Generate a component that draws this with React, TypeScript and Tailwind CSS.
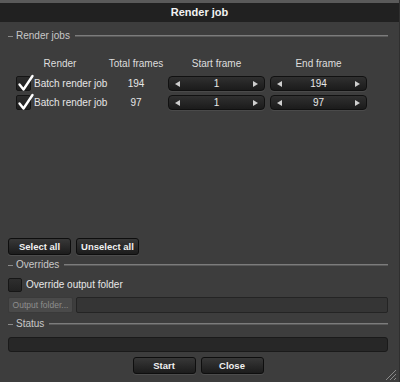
import React from "react";

const font = { fontFamily: '"Liberation Sans", Arial, sans-serif' };

function Legend({ label }: { label: string }) {
  return (
    <div className="flex items-center h-[12px] pl-[8px] pr-[11px]">
      <div className="w-[5px] h-[1px] bg-[#8a8a8a] mr-[3px]" />
      <span className="text-[10px] text-[#c8c8c8] leading-none whitespace-nowrap">{label}</span>
      <div className="flex-1 h-[2px] bg-[#7c7c7c] ml-[5px] border-b border-[#5a5a5a]" />
    </div>
  );
}

function Check({ checked }: { checked: boolean }) {
  return (
    <div className="relative shrink-0 w-[15px] h-[15px] rounded-[2px] bg-gradient-to-b from-[#2c2c2c] to-[#1e1e1e] border border-[#151515]">
      {checked && (
        <svg className="absolute left-[0px] top-[-3px]" width="18" height="18" viewBox="0 0 18 18">
          <path d="M2.5 10.5 L6.5 15.5 L15.5 2" fill="none" stroke="#ffffff" strokeWidth="2.4" strokeLinecap="round" strokeLinejoin="round" />
        </svg>
      )}
    </div>
  );
}

function Spinner({ value }: { value: string }) {
  return (
    <div className="relative flex items-center justify-center h-[15px] w-[97px] rounded-[4px] bg-gradient-to-b from-[#303030] to-[#1b1b1b] border border-[#111] shadow-[0_1px_0_#4a4a4a]">
      <svg className="absolute left-[6px] top-[4px]" width="5" height="6" viewBox="0 0 5 6">
        <path d="M5 0 L0 3 L5 6 Z" fill="#cfcfcf" />
      </svg>
      <span className="text-[10px] text-[#e8e8e8] leading-none">{value}</span>
      <svg className="absolute right-[6px] top-[4px]" width="5" height="6" viewBox="0 0 5 6">
        <path d="M0 0 L5 3 L0 6 Z" fill="#cfcfcf" />
      </svg>
    </div>
  );
}

function Btn({ label }: { label: string }) {
  return (
    <div className="w-[63px] h-[17px] flex items-center justify-center rounded-[3px] bg-gradient-to-b from-[#383838] to-[#1c1c1c] border border-[#0e0e0e] shadow-[0_1px_0_#4c4c4c]">
      <span className="text-[9.5px] font-bold text-[#f0f0f0] leading-none whitespace-nowrap">{label}</span>
    </div>
  );
}

export default function App() {
  const rows = [
    { total: "194", start: "1", end: "194" },
    { total: "97", start: "1", end: "97" },
  ];
  return (
    <div style={font} className="relative w-[400px] h-[382px] bg-[#3d3d3d] flex flex-col overflow-hidden border-r border-[#2f2f2f]">
      <div className="h-[3px] bg-[#5a5a5a]" />
      <div className="h-[19px] bg-[#212121] flex items-center justify-center">
        <span className="text-[11px] font-bold text-[#f2f2f2] leading-none">Render job</span>
      </div>
      <div className="mt-[8px]">
        <Legend label="Render jobs" />
      </div>
      <div className="mt-[17px] pl-[16px]">
        <div className="grid grid-cols-[88px_64px_97px_102px] text-[10px] text-[#dedede]">
          <div className="text-center leading-none whitespace-nowrap">Render</div>
          <div className="text-center leading-none whitespace-nowrap">Total frames</div>
          <div className="text-center leading-none whitespace-nowrap">Start frame</div>
          <div className="text-center leading-none whitespace-nowrap pl-[5px]">End frame</div>
        </div>
        <div className="mt-[7px] flex flex-col gap-[4px]">
          {rows.map((r, i) => (
            <div key={i} className="grid grid-cols-[88px_64px_97px_102px] items-center h-[15px]">
              <div className="flex items-center gap-[3px]">
                <Check checked />
                <span className="text-[10px] text-[#e6e6e6] leading-none whitespace-nowrap">Batch render job</span>
              </div>
              <div className="text-center text-[10px] text-[#e6e6e6] leading-none">{r.total}</div>
              <Spinner value={r.start} />
              <div className="pl-[5px]">
                <Spinner value={r.end} />
              </div>
            </div>
          ))}
        </div>
      </div>
      <div className="flex-1" />
      <div className="flex gap-[5px] pl-[8px]">
        <Btn label="Select all" />
        <Btn label="Unselect all" />
      </div>
      <div className="mt-[4px]">
        <Legend label="Overrides" />
      </div>
      <div className="mt-[7px] pl-[8px] flex items-center gap-[4px] h-[14px]">
        <div className="w-[14px] h-[14px] rounded-[2px] bg-gradient-to-b from-[#2e2e2e] to-[#222] border border-[#161616]" />
        <span className="text-[10px] text-[#e8e8e8] leading-none whitespace-nowrap">Override output folder</span>
      </div>
      <div className="mt-[5px] pl-[8px] pr-[11px] flex gap-[3px] h-[16px]">
        <div className="w-[65px] h-[16px] flex items-center justify-center rounded-[2px] bg-[#4a4a4a] border border-[#3a3a3a]">
          <span className="text-[8.5px] text-[#8e8e8e] leading-none whitespace-nowrap">Output folder...</span>
        </div>
        <div className="flex-1 h-[16px] rounded-[2px] bg-[#353535] border border-[#242424]" />
      </div>
      <div className="mt-[5px]">
        <Legend label="Status" />
      </div>
      <div className="mt-[7px] pl-[8px] pr-[11px]">
        <div className="h-[15px] rounded-[3px] bg-[#272727] border border-[#1a1a1a]" />
      </div>
      <div className="mt-[5px] mb-[8px] flex justify-center gap-[5px] pr-[3px]">
        <Btn label="Start" />
        <Btn label="Close" />
      </div>
      <svg className="absolute right-[2px] bottom-[1px]" width="13" height="13" viewBox="0 0 13 13">
        <path d="M12 2 L2 12 M12 6 L6 12 M12 10 L10 12" stroke="#8a8a8a" strokeWidth="1" />
      </svg>
    </div>
  );
}
